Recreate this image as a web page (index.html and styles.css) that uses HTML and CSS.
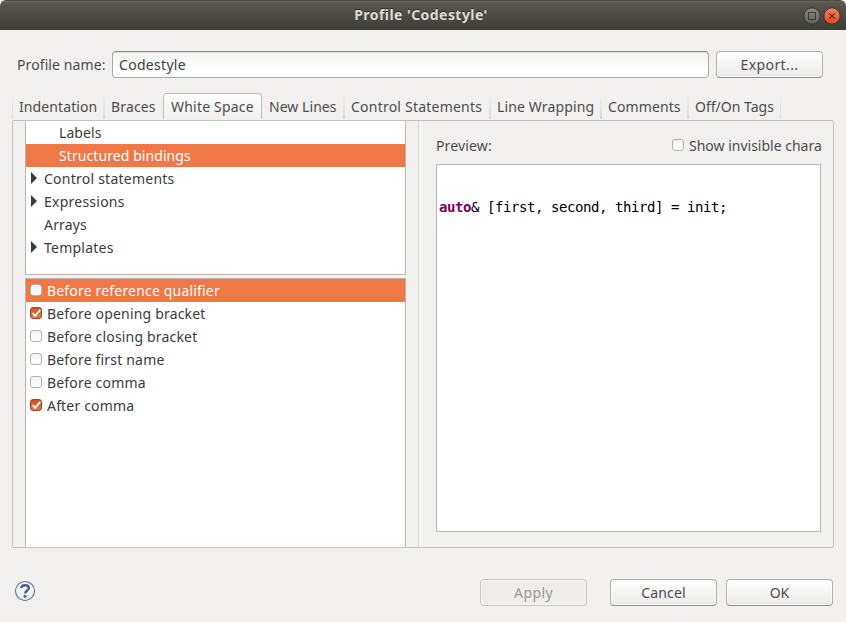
FILE: index.html
```
<!DOCTYPE html>
<html lang="en">
<head>
<meta charset="utf-8">
<title>Profile 'Codestyle'</title>
<link rel="stylesheet" href="styles.css">
</head>
<body>
<div class="dialog">
  <header class="titlebar">
    <h1>Profile 'Codestyle'</h1>
    <div class="controls">
      <svg width="18" height="18" viewBox="0 0 18 18">
        <defs><linearGradient id="g1" x1="0" y1="0" x2="0" y2="1"><stop offset="0" stop-color="#8b8a82"/><stop offset="1" stop-color="#62615a"/></linearGradient></defs>
        <circle cx="9" cy="9" r="8.2" fill="url(#g1)" stroke="#35342f"/>
        <rect x="5.5" y="5.5" width="7" height="7" fill="none" stroke="#3a3934"/>
      </svg>
      <svg width="18" height="18" viewBox="0 0 18 18">
        <defs><linearGradient id="g2" x1="0" y1="0" x2="0" y2="1"><stop offset="0" stop-color="#f58463"/><stop offset="1" stop-color="#dd4814"/></linearGradient></defs>
        <circle cx="9" cy="9" r="8.2" fill="url(#g2)" stroke="#35342f"/>
        <path d="M6.3 6.3l5.4 5.4M11.7 6.3l-5.4 5.4" stroke="#46302a" stroke-width="1.2"/>
      </svg>
    </div>
  </header>

  <div class="profile">
    <label>Profile name:</label>
    <div class="field">Codestyle</div>
    <button class="btn export">Export...</button>
  </div>

  <nav class="tabs">
    <div class="tab t1">Indentation</div>
    <div class="tab t2">Braces</div>
    <div class="tab active t3">White Space</div>
    <div class="tab t4">New Lines</div>
    <div class="tab t5">Control Statements</div>
    <div class="tab t6">Line Wrapping</div>
    <div class="tab t7">Comments</div>
    <div class="tab t8">Off/On Tags</div>
  </nav>

  <main class="page">
    <section class="lists">
      <ul class="tree">
        <li class="child">Labels</li>
        <li class="child selected">Structured bindings</li>
        <li class="parent">Control statements</li>
        <li class="parent">Expressions</li>
        <li>Arrays</li>
        <li class="parent">Templates</li>
      </ul>
      <ul class="options">
        <li class="selected"><i class="check"></i><span>Before reference qualifier</span></li>
        <li><i class="check on"><svg viewBox="0 0 12 12"><path d="M2.5 6l2.6 2.8L10.3 2.8"/></svg></i><span>Before opening bracket</span></li>
        <li><i class="check"></i><span>Before closing bracket</span></li>
        <li><i class="check"></i><span>Before first name</span></li>
        <li><i class="check"></i><span>Before comma</span></li>
        <li><i class="check on"><svg viewBox="0 0 12 12"><path d="M2.5 6l2.6 2.8L10.3 2.8"/></svg></i><span>After comma</span></li>
      </ul>
    </section>
    <div class="sash"></div>
    <section class="preview">
      <div class="preview-head">
        <span>Preview:</span>
        <div class="invisible"><i class="check"></i><span>Show invisible chara</span></div>
      </div>
      <pre class="code"><b>auto</b>&amp; [first, second, third] = init;</pre>
    </section>
  </main>

  <footer class="footer">
    <svg class="help" width="22" height="22" viewBox="0 0 22 22">
      <circle cx="11" cy="11" r="9.5" fill="#f2f3f5" stroke="#5f7192" stroke-width="1.1"/>
      <path d="M7.300 8C7.500 6 9 5.300 11 5.300c2.300 0 3.800 1 3.800 2.700 0 2.500-3.600 2.600-3.600 5.500" fill="none" stroke="#4c6088" stroke-width="2.500"/>
      <circle cx="11" cy="16.300" r="1.500" fill="#4c6088"/>
    </svg>
    <button class="btn apply" disabled>Apply</button>
    <button class="btn cancel">Cancel</button>
    <button class="btn ok">OK</button>
  </footer>
</div>
</body>
</html>
```

FILE: styles.css
```
* { box-sizing: border-box; }
body { margin: 0; background: #fff; font: 14px/23px "Noto Sans", "Open Sans", sans-serif; color: #4c4c4c; }
ul { list-style: none; margin: 0; padding: 0; }
.dialog { width: 846px; height: 622px; background: #f2f1f0; border-radius: 6px 6px 0 0; overflow: hidden; display: flex; flex-direction: column; white-space: nowrap; }
.titlebar { height: 30px; flex: none; display: grid; grid-template-columns: 1fr auto 1fr; align-items: center; background: linear-gradient(#5b5951, #3d3c37); border-top: 1px solid #4b4a43; box-shadow: inset 0 1px #6a685e; }
.titlebar h1 { grid-column: 2; margin: 0; font-size: 14px; line-height: 26px; padding-bottom: 2px; color: #dfdbd2; text-shadow: 0 -1px #2e2d29; padding-right: 4px; letter-spacing: .45px; }
.controls { grid-column: 3; justify-self: end; display: flex; gap: 2px; padding-right: 5px; }
.profile { height: 28px; margin: 21px 23px 0 17px; display: flex; flex: none; letter-spacing: .1px; }
.profile label { width: 95px; line-height: 27px; }
.field { width: 597px; height: 27px; margin-right: 7px; padding-left: 6px; line-height: 26px; color: #3c3c3c; letter-spacing: .3px; border: 1px solid #aaa8a5; border-top-color: #8c8b89; border-radius: 4px; background: linear-gradient(#f3f3f2, #fff 80%); box-shadow: inset 0 1px #ddd; }
.btn { width: 107px; height: 27px; padding: 0; font: inherit; line-height: 25px; color: #4c4c4c; border: 1px solid #b2b0ad; border-bottom-color: #92908d; border-radius: 4px; background: linear-gradient(#fff, #ebeae9); box-shadow: inset 0 0 0 1px #ffffff90; }
.export { letter-spacing: .4px; }
.tabs { height: 27px; margin: 14px 0 0 12px; display: flex; flex: none; }
.tab { height: 24px; margin-top: 2px; padding-left: 6px; line-height: 24px; border-right: 2px solid; border-image: linear-gradient(#f2f1f0, #d8d7d5) 1; }
.t1 { width: 93px; border-left: 1px solid; letter-spacing: .1px; }
.t2 { width: 58px; border-right: 0; letter-spacing: .15px; }
.t3 { width: 99px; letter-spacing: .2px; }
.t4 { width: 83px; padding-left: 7px; letter-spacing: .05px; }
.t5 { width: 146px; letter-spacing: .22px; }
.t6 { width: 111px; letter-spacing: .13px; }
.t7 { width: 87px; letter-spacing: .1px; }
.t8 { width: 92px; border-right-width: 1px; }
.tab.active { height: 26px; margin-top: 0; padding-left: 7px; border: 1px solid #c0bebb; border-bottom: 0; border-image: none; border-radius: 4px 4px 0 0; background: linear-gradient(#fdfdfd, #f2f1f0); line-height: 26px; }
.page { width: 822px; height: 428px; margin-left: 12px; flex: none; display: flex; border: 1px solid #c4c2bf; border-radius: 2px; padding-left: 12px; }
.lists { width: 381px; display: flex; flex-direction: column; gap: 3px; color: #3c3c3c; letter-spacing: .18px; }
.tree { height: 154px; background: #fff; border: solid #b8b6b3; border-width: 0 1px 1px; }
.tree li { padding-left: 18px; height: 23px; line-height: 24px; }
.tree .child { padding-left: 33px; letter-spacing: .08px; }
.tree .parent { padding-left: 5px; display: flex; gap: 7px; letter-spacing: .24px; }
.tree .parent::before { content: ""; height: 0; margin-top: 5px; border-left: 6px solid #3c3c3c; border-top: 6px solid transparent; border-bottom: 6px solid transparent; }
.lists .selected { background: #f07746; color: #fff; }
.options { flex: 1; background: #fff; border: solid #b8b6b3; border-width: 1px 1px 0; }
.options li { height: 23px; line-height: 24px; display: flex; gap: 5px; padding-left: 4px; }
.check { width: 12px; height: 12px; margin-top: 5px; border: 1px solid #b3b1ae; border-radius: 3px; background: linear-gradient(#f3f3f3, #fff); flex: none; display: block; }
.check.on { border-color: #a44420; background: linear-gradient(#cf5122, #e07a50); }
.check svg { display: block; width: 12px; height: 12px; margin: -1px; }
.check path { fill: none; stroke: #fff; stroke-width: 1.8; }
.sash { width: 3px; margin-left: 12px; border-left: 1px solid #d9d7d5; border-right: 1px solid #fff; }
.preview { width: 385px; margin-left: 15px; }
.preview-head { display: flex; justify-content: space-between; height: 43px; padding-top: 13px; letter-spacing: .15px; }
.invisible { width: 149px; display: flex; gap: 5px; letter-spacing: 0; }
.code { height: 368px; margin: 0; padding: 31px 2px; background: #fff; border: 1px solid #b8b6b3; color: #000; font: 14px/23px "DejaVu Sans Mono", monospace; letter-spacing: -.428px; }
.code b { color: #7f0055; }
.footer { display: flex; margin: 31px 13px 0 14px; }
.help { margin: 1px auto 0 0; }
.apply { margin-right: 23px; color: #9a9896; background: #eeedec; border-color: #c8c6c4; letter-spacing: .4px; }
.cancel { margin-right: 9px; letter-spacing: .15px; }
```
